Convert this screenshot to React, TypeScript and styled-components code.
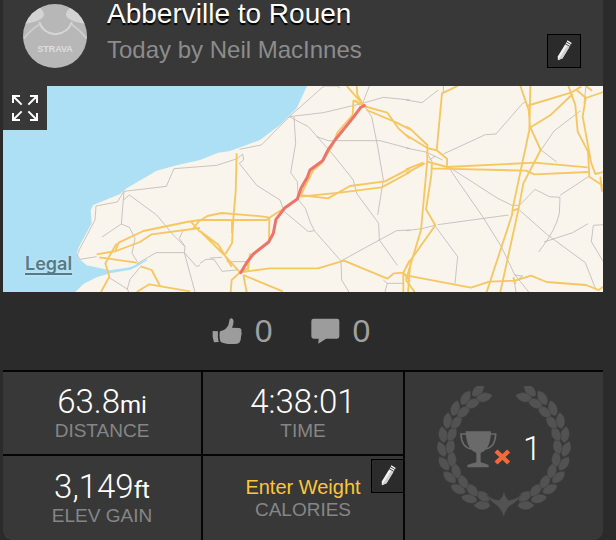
import React from "react";
import styled, { createGlobalStyle } from "styled-components";

const GlobalStyle = createGlobalStyle`
  *, *::before, *::after { box-sizing: border-box; }
  body {
    margin: 0;
    background: #2b2b2b;
    font-family: "Liberation Sans", Arial, sans-serif;
  }
  button { font: inherit; color: inherit; padding: 0; cursor: pointer; }
`;

const Card = styled.main`
  margin: 0 13px 0 3px;
  background: #383838;
  border-radius: 0 0 8px 8px;
  overflow: hidden;
`;

const Header = styled.header`
  display: flex;
  align-items: flex-start;
  gap: 20px;
  padding: 0 22px 18px 20px;
`;

const Avatar = styled.svg`
  flex: none;
  width: 64px;
  height: 64px;
  margin-top: 4px;
`;

const Heading = styled.div`
  flex: 1;
  min-width: 0;
`;

const Title = styled.h1`
  margin: 0 0 8px;
  font-size: 28px;
  font-weight: 400;
  line-height: 28px;
  color: #fff;
  text-shadow: 0 2px 1px #000;
`;

const Byline = styled.p`
  margin: 0;
  font-size: 24px;
  line-height: 28px;
  color: #8c8c8c;
`;

const IconButton = styled.button`
  display: grid;
  place-items: center;
  flex: none;
  width: 34px;
  height: 34px;
  border: 1px solid #000;
  background: #2b2b2b;
`;

const HeaderEdit = styled(IconButton)`
  align-self: flex-end;
`;

const MapPanel = styled.section`
  position: relative;
`;

const MapDrawing = styled.svg`
  display: block;
  width: 100%;
  height: auto;
`;

const ExpandButton = styled.button`
  position: absolute;
  top: 0;
  left: 0;
  display: grid;
  place-items: center;
  width: 44px;
  height: 44px;
  border: 0;
  background: #383838;
`;

const LegalLink = styled.a`
  position: absolute;
  left: 22px;
  bottom: 16px;
  font-family: Inter, sans-serif;
  font-size: 18px;
  font-weight: 600;
  line-height: 24px;
  color: #567a87;
  text-shadow: 0 0 2px #d5eef8;
  text-underline-offset: 3px;
  text-decoration-thickness: 2px;
  text-decoration-skip-ink: none;
`;

const Social = styled.section`
  display: flex;
  align-items: center;
  justify-content: center;
  gap: 38px;
  padding: 20px 24px 20px 0;
  background: #2b2b2b;
`;

const Reaction = styled.button`
  display: flex;
  align-items: center;
  gap: 13px;
  border: 0;
  background: none;
  color: #a0a0a0;
  font-size: 32px;
  line-height: 38px;
`;

const Stats = styled.section`
  display: grid;
  grid-template-columns: 99fr 100fr 99fr;
  grid-template-rows: 82px 84px;
  gap: 2px;
  padding-top: 2px;
  background: #050505;
`;

const Cell = styled.div`
  position: relative;
  display: flex;
  flex-direction: column;
  align-items: center;
  justify-content: center;
  background: #383838;
`;

const Value = styled.div`
  font-family: Roboto, "Liberation Sans", sans-serif;
  font-size: 33px;
  font-weight: 300;
  line-height: 36px;
  color: #fff;
`;

const Unit = styled.span`
  font-size: 24px;
  font-weight: 400;
  line-height: 1;
`;

const Label = styled.div`
  font-size: 19px;
  line-height: 22px;
  color: #868686;
`;

const WeightButton = styled.button`
  border: 0;
  background: none;
  && { color: #fcc63a; font-size: 20px; line-height: 24px; }
`;

const CellEdit = styled(IconButton)`
  position: absolute;
  top: 3px;
  right: 0;
  width: 32px;
  border-right: 0;
`;

const Awards = styled(Cell)`
  grid-column: 3;
  grid-row: 1 / span 2;
  padding-bottom: 8px;
`;

const Badge = styled.div`
  display: grid;
  align-items: center;
  width: 136px;
  & > * { grid-area: 1 / 1; }
`;

const AwardCount = styled.div`
  display: flex;
  align-items: center;
  gap: 12px;
  padding: 0 0 6px 24px;
`;

const Pencil = () => (
  <svg width="18" height="24" viewBox="0 0 18 24" aria-hidden="true">
    <g transform="translate(9 12) rotate(31)">
      <path d="M-2.5-6.5H2.5V7L-0.5 11L-2.5 8Z" fill="#f2f2f2" />
      <path d="M0-6.5H2.5V7L-0.5 11Z" fill="#cfcfcf" />
      <path d="M-2.5-8H2.5M-2.5-10.2H2.5" stroke="#f4f4f4" strokeWidth="1.4" />
    </g>
  </svg>
);

const JerseyAvatar = () => (
  <Avatar viewBox="0 0 192 192" role="img" aria-label="Strava">
    <defs>
      <clipPath id="disc"><circle cx="96" cy="96" r="96" /></clipPath>
    </defs>
    <g clipPath="url(#disc)">
      <path d="M0 0H192V192H0Z" fill="#b7b7b7" />
      <path d="M0 60L4 20L52 12Q70 30 58 42Q40 56 0 60ZM192 60L188 20L140 12Q122 30 134 42Q152 56 192 60Z" fill="#d3d3d3" />
      <path d="M49 54Q60 88 97 91Q134 88 147 54" fill="none" stroke="#d6d6d6" strokeWidth="6" />
      <path d="M51 60Q22 78 2 104M145 60Q170 78 192 104" fill="none" stroke="#cecece" strokeWidth="5" />
      <text x="96" y="145" textAnchor="middle" fontSize="27" fontWeight="700" fill="#dddddd">STRAVA</text>
    </g>
  </Avatar>
);

const minorRoads = {
  west: [
    "M600 260L522 266L499 319L372 334L364 432L388 442L405 475L396 520L413 547",
    "M372 334L352 366L288 378L285 420L240 505L232 525L240 538L290 530",
    "M370 360L388 345L470 405L520 465L555 500L553 518H468L410 552",
    "M306 471L364 432M550 450L538 475L555 500M553 518L590 560L600 555M553 518L585 636",
    "M326 592L382 627L390 598L422 560M382 627L386 636",
  ],
  central: [
    "M0 260L50 256L112 236L128 222L131 240L118 250L170 316L240 360L253 395L325 455L343 452L330 425L316 385L292 355",
    "M118 208L184 195L268 110L370 98L488 70L550 52L630 60M268 110L365 24L374 18H410L420 24",
    "M282 110L287 190L272 278L292 305L294 345M268 110L325 140L400 225L460 300L470 340L536 430L538 480L592 556",
    "M350 170L385 182H540L630 206M488 70L515 110L533 200L550 300L533 405",
    "M343 452L423 543L538 480L590 452L630 450M423 543L425 600L447 636M488 70L508 18",
    "M0 550L18 538H42L66 574L110 570M66 532L30 534M80 545H140L146 575M550 600L562 610H610M562 610L555 636",
  ],
  east: [
    "M0 60L48 68L97 30M112 18V36M112 222L238 164L270 162L350 70L360 65",
    "M524 92L444 153L405 210L452 246M0 204L60 216L110 240M70 240L88 228",
    "M130 262L190 300L275 355L318 376H340L387 328L430 350L462 352L460 400Q450 450 398 516",
    "M130 262L140 280L230 410L285 498L325 582L368 636M95 434L308 405M0 452L48 446L86 436",
    "M86 436L155 530L147 610M340 390L425 465L538 548L570 630M462 346L550 288M414 486L500 458L546 431",
    "M592 434L562 436L556 485L592 545M325 585L350 588L325 605L330 636M534 70L540 18M60 216L78 244",
  ],
};

const majorRoads = {
  west: [
    "M290 523L348 513L420 486L455 463L600 444M346 513L356 488L430 453L560 426L600 420M572 424L590 444L600 456M580 444L600 420",
    "M298 532L410 548M350 490L316 550L328 590L303 636M422 559L455 570L480 618M410 636L448 613L570 634",
  ],
  central: [
    "M0 420H200L208 413L185 409L65 399L22 408L0 422M208 413L207 485M208 413L255 383L295 355",
    "M0 453L70 522L120 577L95 600L92 636M0 453L55 494L95 560M110 220L107 335L100 415L96 490L76 522M96 420V460",
    "M122 577L208 565H354L432 542L562 596L582 580L610 578L630 540M610 578L630 604M610 578V636M630 560L624 636",
    "M130 585L140 636M130 585L248 634M150 520L145 565L120 577",
    "M300 345L384 355L450 318L555 304L630 265M300 350L420 338L545 322L630 276",
    "M490 75L460 62L458 105L412 158L400 192L365 250L340 270L302 345",
    "M490 75L440 18M490 75L472 45L470 18M464 60L480 75M490 78L562 98L595 145L630 176M500 90L590 128L630 148",
  ],
  east: [
    "M0 140L12 146L64 195V240L45 450L0 600M0 165L64 204L92 211L108 40L155 18M92 211L123 236V261L64 245",
    "M123 261L385 248L545 262M76 265L360 272L385 283L548 276M78 245L76 285L60 388L88 436L0 560M0 280L56 250M0 268L52 248",
    "M343 18L368 90L372 140L404 210L352 310L338 385L283 636M373 18L370 150L320 385L318 405L242 636M322 392L338 385",
    "M362 78L495 38L525 20M374 142L435 104L500 42M487 18L508 75L515 155L546 215L550 290L592 318M540 50L530 110L556 250L568 282L592 276",
    "M592 36L540 54L512 30M540 18L558 32M583 290L588 335",
    "M0 586L195 623L250 605L328 602L375 587L422 606L540 615L578 630L592 620M0 600L26 636M322 592L328 612",
  ],
};

const regions = [
  { key: "west", x: -9 },
  { key: "central", x: 591 },
  { key: "east", x: 1209 },
] as const;

const RouteMap = () => (
  <MapDrawing viewBox="0 0 1800 618" role="img" aria-label="Route from Abberville to Rouen">
    <path d="M0 0H1800V618H0Z" fill="#f9f4ec" />
    <g transform="translate(-9 -18)">
      <path
        d="M0 0H932L920 20L890 85L840 135L780 180L690 213L655 218L600 240L530 256L470 272L380 325L360 342L280 375L272 390L275 430L237 500L230 520L235 535L260 556L330 571L390 562L412 552L440 538L442 541L414 558L392 569L330 580L290 592L250 612L222 640H0Z"
        fill="#ade0f5"
      />
    </g>
    <g fill="none" strokeLinejoin="round">
      {regions.map((r) => (
        <g key={r.key} transform={`translate(${r.x} -18)`} stroke="#bdb8b3" strokeWidth="2.4">
          {minorRoads[r.key].map((d) => <path key={d} d={d} />)}
        </g>
      ))}
      {regions.map((r) => (
        <g key={r.key} transform={`translate(${r.x} -18)`} stroke="#f6c661" strokeWidth="5.5">
          {majorRoads[r.key].map((d) => <path key={d} d={d} />)}
        </g>
      ))}
      <path
        transform="translate(591 -18)"
        d="M493 77L482 82L460 112L405 180L385 208L368 242L330 270L322 292L303 325L292 357L255 383L228 418L220 460L206 486L160 522L140 548L122 578"
        stroke="#ee736a"
        strokeWidth="9"
        strokeLinecap="round"
      />
    </g>
  </MapDrawing>
);

const ExpandIcon = () => (
  <svg width="26" height="26" viewBox="0 0 78 78" fill="none" stroke="#fff" strokeWidth="6" aria-hidden="true">
    <path d="M3 24V3H24M3 3L29 29M54 3H75V24M75 3L49 29M3 54V75H24M3 75L29 49M54 75H75V54M75 75L49 49" />
  </svg>
);

const ThumbIcon = () => (
  <svg width="30" height="27" viewBox="0 0 90 81" fill="#9c9c9c" aria-hidden="true">
    <path d="M2 39L18 40Q16 57 20 72L6 73Q0 56 2 39Z" />
    <path d="M24 40Q40 38 49 22L53 4Q60-3 64 6Q66 16 60 29L82 30Q90 31 88 39L89 47L87 56L86 66L82 74Q78 78 66 78H48Q36 77 26 72Q20 56 24 40Z" />
  </svg>
);

const CommentIcon = () => (
  <svg width="29" height="26" viewBox="0 0 87 78" fill="#9c9c9c" aria-hidden="true">
    <path d="M8 2H78Q85 2 85 9V55Q85 62 78 62H45L22 77L23 62H8Q1 62 1 55V9Q1 2 8 2Z" />
  </svg>
);

const stations = Array.from({ length: 11 }, (_, i) => 13 + i * 13.5);
const leafPath = "M0 0C-19-8-19-34 2-50C19-36 17-10 0 0Z";

const LaurelBranch = () => (
  <>
    {stations.map((deg) => {
      const t = (deg * Math.PI) / 180;
      const x = 314 + 175 * Math.sin(t);
      const y = 245 + 175 * Math.cos(t);
      return (
        <g key={deg} transform={`translate(${x} ${y}) rotate(${90 - deg})`}>
          <path d={leafPath} transform="translate(6 0) rotate(9)" />
          <path d={leafPath} transform="translate(-7 -6) rotate(-24)" />
        </g>
      );
    })}
  </>
);

const Laurel = () => (
  <svg width="136" height="132" viewBox="110 62 408 396" fill="#525252" stroke="#3c3c3c" strokeWidth="1.5" aria-hidden="true">
    <LaurelBranch />
    <g transform="translate(628 0) scale(-1 1)"><LaurelBranch /></g>
    <path d="M314 378Q318 396 328 405Q345 404 366 389Q352 412 334 420Q320 430 313 456Q306 430 292 420Q276 412 262 389Q282 404 299 405Q310 396 314 378Z" />
  </svg>
);

const TrophyTimes = () => (
  <svg width="51" height="37" viewBox="0 0 153 111" aria-hidden="true">
    <path d="M19 9H3Q4 48 33 54M91 9H107Q106 48 77 54" fill="none" stroke="#6a6a6a" strokeWidth="5" />
    <path d="M17 1H93Q92 56 62 66V94Q76 98 86 102V109H22V102Q36 98 49 94V66Q19 56 17 1Z" fill="#6a6a6a" />
    <path d="M108 60L146 96M146 60L108 96" stroke="#f2693a" strokeWidth="13" />
  </svg>
);

export default function App() {
  return (
    <>
      <GlobalStyle />
      <Card>
        <Header>
          <JerseyAvatar />
          <Heading>
            <Title>Abberville to Rouen</Title>
            <Byline>Today by Neil MacInnes</Byline>
          </Heading>
          <HeaderEdit type="button" aria-label="Edit activity"><Pencil /></HeaderEdit>
        </Header>

        <MapPanel>
          <RouteMap />
          <ExpandButton type="button" aria-label="Expand map"><ExpandIcon /></ExpandButton>
          <LegalLink href="#legal">Legal</LegalLink>
        </MapPanel>

        <Social>
          <Reaction type="button" aria-label="Kudos: 0"><ThumbIcon />0</Reaction>
          <Reaction type="button" aria-label="Comments: 0"><CommentIcon />0</Reaction>
        </Social>

        <Stats>
          <Cell>
            <Value>63.8<Unit>mi</Unit></Value>
            <Label>DISTANCE</Label>
          </Cell>
          <Cell>
            <Value>4:38:01</Value>
            <Label>TIME</Label>
          </Cell>
          <Cell>
            <Value>3,149<Unit>ft</Unit></Value>
            <Label>ELEV GAIN</Label>
          </Cell>
          <Cell>
            <WeightButton type="button">Enter Weight</WeightButton>
            <Label>CALORIES</Label>
            <CellEdit type="button" aria-label="Edit weight"><Pencil /></CellEdit>
          </Cell>
          <Awards>
            <Badge>
              <Laurel />
              <AwardCount>
                <TrophyTimes />
                <Value>1</Value>
              </AwardCount>
            </Badge>
          </Awards>
        </Stats>
      </Card>
    </>
  );
}
